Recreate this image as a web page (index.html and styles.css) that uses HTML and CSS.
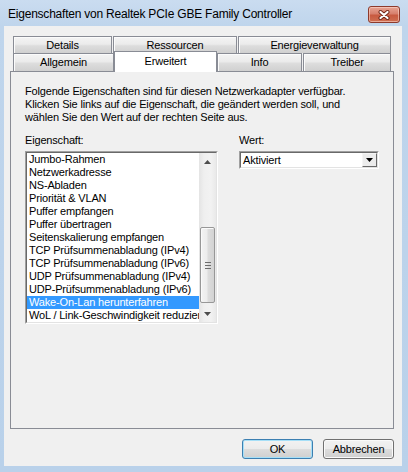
FILE: index.html
```html
<!DOCTYPE html>
<html lang="de">
<head>
<meta charset="utf-8">
<title>Eigenschaften</title>
<link rel="stylesheet" href="styles.css">
</head>
<body>
<div class="window">
  <div class="titlebar">
    <span class="title">Eigenschaften von Realtek PCIe GBE Family Controller</span>
    <div class="close">
      <svg width="12" height="10" viewBox="0 0 12 10"><path d="M2.5 2 L9.5 8 M9.5 2 L2.5 8" stroke="#6e2517" stroke-width="4" stroke-linecap="round"/><path d="M2.5 2 L9.5 8 M9.5 2 L2.5 8" stroke="#ffffff" stroke-width="2.2" stroke-linecap="round"/></svg>
    </div>
  </div>
  <div class="client">
    <div class="tabs">
      <div class="tabrow back">
        <div class="tab w-details">Details</div>
        <div class="tab w-ress">Ressourcen</div>
        <div class="tab w-energie">Energieverwaltung</div>
      </div>
      <div class="tabrow front">
        <div class="tab w-allg">Allgemein</div>
        <div class="tab selected w-erw">Erweitert</div>
        <div class="tab w-info">Info</div>
        <div class="tab w-treiber">Treiber</div>
      </div>
    </div>
    <div class="panel">
      <p class="intro">Folgende Eigenschaften sind für diesen Netzwerkadapter verfügbar.<br>Klicken Sie links auf die Eigenschaft, die geändert werden soll, und<br>wählen Sie den Wert auf der rechten Seite aus.</p>
      <div class="fields">
        <div class="col-left">
          <div class="label">Eigenschaft:</div>
          <div class="listbox">
            <div class="listbox-inner">
              <ul class="items">
                <li>Jumbo-Rahmen</li>
                <li>Netzwerkadresse</li>
                <li>NS-Abladen</li>
                <li>Priorität &amp; VLAN</li>
                <li>Puffer empfangen</li>
                <li>Puffer übertragen</li>
                <li>Seitenskalierung empfangen</li>
                <li>TCP Prüfsummenabladung (IPv4)</li>
                <li>TCP Prüfsummenabladung (IPv6)</li>
                <li>UDP Prüfsummenabladung (IPv4)</li>
                <li>UDP-Prüfsummenabladung (IPv6)</li>
                <li class="sel">Wake-On-Lan herunterfahren</li>
                <li>WoL / Link-Geschwindigkeit reduzieren</li>
              </ul>
              <div class="scrollbar">
                <div class="sb-btn"><svg width="7" height="4" viewBox="0 0 7 4"><path d="M0 4 L3.5 0 L7 4 Z" fill="#4d4d4d"/></svg></div>
                <div class="sb-track">
                  <div class="sb-thumb">
                    <svg width="6" height="7" viewBox="0 0 6 7"><path d="M0 0.5 H6 M0 3.5 H6 M0 6.5 H6" stroke="#6d6d6d" stroke-width="1"/></svg>
                  </div>
                </div>
                <div class="sb-btn"><svg width="7" height="4" viewBox="0 0 7 4"><path d="M0 0 L7 0 L3.5 4 Z" fill="#4d4d4d"/></svg></div>
              </div>
            </div>
          </div>
        </div>
        <div class="col-right">
          <div class="label">Wert:</div>
          <div class="combo">
            <div class="combo-inner">
              <span class="combo-text">Aktiviert</span>
              <span class="combo-btn"><svg width="7" height="4" viewBox="0 0 7 4"><path d="M0 0 L7 0 L3.5 4 Z" fill="#000"/></svg></span>
            </div>
          </div>
        </div>
      </div>
    </div>
    <div class="buttons">
      <button class="btn default">OK</button>
      <button class="btn">Abbrechen</button>
    </div>
  </div>
</div>
</body>
</html>
```
FILE: styles.css
```css
* { box-sizing: border-box; margin: 0; padding: 0; }
html, body { width: 408px; height: 472px; overflow: hidden; }
body {
  font-family: "Liberation Sans", Arial, sans-serif;
  font-size: 11px;
  letter-spacing: -0.17px;
  color: #000;
  background: #b9d1ea;
}
.window {
  width: 408px;
  height: 472px;
  display: flex;
  flex-direction: column;
  background: linear-gradient(#cadcf0, #bfd5ec 26px, #b9d1ea);
  padding: 0 6px 6px 4px;
}
.titlebar {
  height: 26px;
  flex: none;
  display: flex;
  justify-content: space-between;
  align-items: flex-start;
  padding: 0 2px 0 4px;
}
.title {
  font-size: 12px;
  letter-spacing: -0.22px;
  line-height: 14px;
  margin-top: 7px;
  white-space: nowrap;
}
.close {
  margin-top: 6px;
  width: 32px;
  height: 17px;
  border: 1px solid #8d3a2c;
  border-radius: 3px;
  background: linear-gradient(#e8a493, #d7806d 45%, #c85a40 55%, #cf6f52);
  box-shadow: inset 0 0 0 1px rgba(255, 220, 210, 0.55);
  display: flex;
  align-items: center;
  justify-content: center;
}
.client {
  flex: 1;
  background: #f0f0f0;
  padding: 10px 8px 0 6px;
  display: flex;
  flex-direction: column;
}
.tabs { padding: 0 3px; }
.tabrow { display: flex; }
.back { height: 17px; gap: 1px; }
.front { height: 18px; }
.tab {
  display: flex;
  align-items: center;
  justify-content: center;
  border: 1px solid #898c95;
  border-bottom: 0;
  background: linear-gradient(#f4f4f4, #ebebeb 45%, #dddddd 55%, #d0d0d0);
  box-shadow: inset 1px 1px 0 #fbfbfb;
  white-space: nowrap;
}
.front .tab { padding-bottom: 1px; }
.w-details { width: 99px; }
.w-ress { width: 124px; }
.w-energie { width: 153px; }
.w-allg { width: 101px; }
.w-erw { width: 103px; }
.w-info { width: 85px; }
.w-treiber { width: 88px; margin-left: 1px; }
.tab.selected {
  position: relative;
  z-index: 1;
  height: 21px;
  margin-top: -2px;
  margin-bottom: -1px;
  align-self: flex-start;
  background: #ffffff;
  box-shadow: none;
  align-items: flex-start;
  padding-top: 3px;
}
.panel {
  height: 358px;
  border: 1px solid #898c95;
  background: #f0f0f0;
  padding: 13px 14px 0 14px;
}
.intro { line-height: 13px; white-space: nowrap; }
.fields { display: flex; gap: 21px; margin-top: 10px; }
.label { line-height: 13px; margin-bottom: 4px; }
.col-left { width: 193px; }
.col-right { width: 148px; }
.listbox {
  height: 173px;
  border: 1px solid;
  border-color: #a0a0a0 #ffffff #ffffff #a0a0a0;
}
.listbox-inner {
  height: 100%;
  display: flex;
  border: 1px solid;
  border-color: #696969 #e3e3e3 #e3e3e3 #696969;
  background: #fff;
}
.items {
  list-style: none;
  flex: 1;
  overflow: hidden;
}
.items li {
  height: 13px;
  line-height: 13px;
  padding-left: 2px;
  white-space: nowrap;
  overflow: hidden;
}
.items li.sel { background: #3399ff; color: #fff; }
.scrollbar {
  width: 17px;
  flex: none;
  display: flex;
  flex-direction: column;
  background: linear-gradient(90deg, #e4e4e4, #efefef 30%, #f2f2f2 70%, #e9e9e9);
}
.sb-btn {
  height: 17px;
  flex: none;
  display: flex;
  align-items: center;
  justify-content: center;
}
.sb-track { flex: 1; padding: 0 1px; }
.sb-thumb {
  margin-top: 57px;
  height: 76px;
  border: 1px solid #979797;
  border-radius: 2px;
  background: linear-gradient(90deg, #f3f3f3, #ececec 45%, #dcdcdc 55%, #d3d3d3);
  box-shadow: inset 1px 1px 0 #fafafa;
  display: flex;
  align-items: center;
  justify-content: center;
}
.combo {
  height: 18px;
  border: 1px solid;
  border-color: #a0a0a0 #ffffff #ffffff #a0a0a0;
}
.combo-inner {
  height: 100%;
  display: flex;
  align-items: stretch;
  border: 1px solid;
  border-color: #696969 #e3e3e3 #e3e3e3 #696969;
  background: #fff;
}
.combo-text {
  flex: 1;
  line-height: 14px;
  padding-left: 2px;
}
.combo-btn {
  width: 15px;
  flex: none;
  display: flex;
  align-items: center;
  justify-content: center;
  border: 1px solid;
  border-color: #f5f5f5 #696969 #696969 #f5f5f5;
  background: #ececec;
}
.buttons {
  display: flex;
  justify-content: flex-end;
  gap: 10px;
  margin-top: 10px;
}
.btn {
  width: 71px;
  height: 20px;
  font-family: "Liberation Sans", Arial, sans-serif;
  font-size: 11px;
  letter-spacing: -0.17px;
  color: #000;
  border: 1px solid #707070;
  border-radius: 3px;
  background: linear-gradient(#f2f2f2, #ebebeb 50%, #dddddd 50%, #cfcfcf);
  box-shadow: inset 0 0 0 1px #fafafa;
}
.btn.default {
  border-color: #3c7fb1;
  box-shadow: inset 0 0 0 1px #a6dff7;
}
```
